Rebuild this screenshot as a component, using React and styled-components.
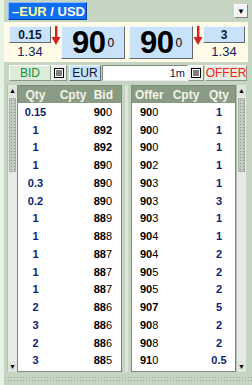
import React from 'react';
import styled, { createGlobalStyle } from 'styled-components';

const bids = [
  ['0.15', '900'], ['1', '892'], ['1', '892'], ['1', '890'], ['0.3', '890'],
  ['0.2', '890'], ['1', '889'], ['1', '888'], ['1', '887'], ['1', '887'],
  ['1', '887'], ['2', '886'], ['3', '886'], ['2', '886'], ['3', '885']
];

const offers = [
  ['900', '1'], ['900', '1'], ['900', '1'], ['902', '1'], ['903', '1'],
  ['903', '3'], ['903', '1'], ['904', '1'], ['904', '2'], ['905', '2'],
  ['905', '2'], ['907', '5'], ['908', '2'], ['908', '2'], ['910', '0.5']
];

const GlobalStyle = createGlobalStyle`
  html, body {
    margin: 0;
    padding: 0;
    background: #c6d4c2;
  }
  body {
    font-family: "Liberation Sans", Arial, sans-serif;
  }
`;

const Window = styled.div`
  width: 252px;
  height: 385px;
  box-sizing: border-box;
  background: #c6d4c2;
  border-left: 4px solid #e6f2e4;
  display: flex;
  flex-direction: column;
  overflow: hidden;
`;

const TitleBar = styled.div`
  height: 22px;
  display: flex;
  align-items: center;
  justify-content: space-between;
  padding: 0 4px 0 4px;
`;

const TitleTab = styled.div`
  width: 79px;
  height: 18px;
  box-sizing: border-box;
  background: #0f6ef2;
  border: 1px solid;
  border-color: #8ab8ff #0040a8 #0040a8 #8ab8ff;
  color: #fff;
  font-size: 13px;
  font-weight: bold;
  display: flex;
  align-items: center;
  padding-left: 3px;
`;

const Ccy = styled.span`
  color: ${p => p.$hi ? '#ffff98' : '#ffffff'};
`;

const DropButton = styled.div`
  width: 14px;
  height: 14px;
  box-sizing: border-box;
  background: #f4f4f4;
  border: 1px solid;
  border-color: #ffffff #808080 #808080 #ffffff;
  display: flex;
  align-items: center;
  justify-content: center;
  font-size: 8px;
  color: #000;
`;

const PricePanel = styled.div`
  background: #fffbe6;
  margin-right: 4px;
  height: 40px;
  padding: 4px 0 0 5px;
  box-sizing: border-box;
  display: grid;
  grid-template-columns: 42px 10px 64px 4px 64px 10px 42px;
  grid-template-rows: 17px 16px;
  align-items: start;
`;

const SizeButton = styled.div`
  grid-row: 1;
  grid-column: ${p => p.$col};
  height: 17px;
  box-sizing: border-box;
  background: #c8e2fa;
  border: 1px solid;
  border-color: #eef6ff #606870 #606870 #eef6ff;
  font-size: 12px;
  font-weight: bold;
  color: #0c1830;
  display: flex;
  align-items: center;
  justify-content: center;
`;

const SubPrice = styled.div`
  grid-row: 2;
  grid-column: ${p => p.$col};
  font-size: 13px;
  color: #14235a;
  text-align: center;
  line-height: 16px;
  padding-top: 1px;
`;

const Arrow = styled.svg`
  grid-row: 1 / span 2;
  grid-column: ${p => p.$col};
  width: 10px;
  height: 20px;
`;

const BigPrice = styled.div`
  grid-row: 1 / span 2;
  grid-column: ${p => p.$col};
  height: 33px;
  box-sizing: border-box;
  background: #c8e2fa;
  border: 1px solid;
  border-color: #eef6ff #606870 #606870 #eef6ff;
  display: flex;
  align-items: center;
  justify-content: center;
  color: #000;
`;

const Figure = styled.span`
  font-size: 31px;
  font-weight: bold;
  letter-spacing: -0.5px;
`;

const Pip = styled.span`
  font-size: 12px;
  margin-left: 2px;
  margin-top: 1px;
`;

const ControlRow = styled.div`
  height: 20px;
  display: flex;
  align-items: center;
  padding: 2px 0 0 5px;
  box-sizing: border-box;
`;

const SideButton = styled.div`
  width: 42px;
  height: 16px;
  box-sizing: border-box;
  background: ${p => p.$bg};
  border: 1px solid;
  border-color: #ffffff #8a9888 #8a9888 #ffffff;
  color: ${p => p.$color};
  font-size: 12px;
  display: flex;
  align-items: center;
  justify-content: center;
  margin-left: ${p => p.$ml || 0}px;
`;

const IconButton = styled.div`
  width: 16px;
  height: 16px;
  box-sizing: border-box;
  background: #ecefec;
  border: 1px solid;
  border-color: #ffffff #8a9888 #8a9888 #ffffff;
  display: flex;
  align-items: center;
  justify-content: center;
`;

const CcyButton = styled.div`
  width: 32px;
  height: 16px;
  margin-left: 2px;
  box-sizing: border-box;
  background: #c8e2fa;
  border: 1px solid;
  border-color: #eef6ff #606870 #606870 #eef6ff;
  color: #0c1830;
  font-size: 12px;
  display: flex;
  align-items: center;
  justify-content: center;
`;

const AmountInput = styled.div`
  width: 86px;
  height: 16px;
  margin-left: 1px;
  box-sizing: border-box;
  background: #fff;
  border: 1px solid;
  border-color: #808880 #f0f0f0 #f0f0f0 #808880;
  color: #102040;
  font-size: 11px;
  display: flex;
  align-items: center;
  justify-content: flex-end;
  padding-right: 2px;
`;

const Books = styled.div`
  flex: 1;
  display: flex;
  padding: 3px 5px 0 3px;
  min-height: 0;
`;

const ScrollBar = styled.div`
  width: 10px;
  box-sizing: border-box;
  background: #e8eae8;
  border-left: 1px solid #b4c0b2;
  display: flex;
  flex-direction: column;
`;

const ScrollArrow = styled.div`
  height: 11px;
  display: flex;
  align-items: center;
  justify-content: center;
  font-size: 7px;
  color: #000;
  background: #dfe4de;
`;

const Thumb = styled.div`
  height: 72px;
  margin: 2px 1px;
  background-color: #c4ccc2;
  background-image: radial-gradient(#8a948a 0.6px, transparent 0.7px);
  background-size: 3px 3px;
  border: 1px solid #a8b2a6;
`;

const Track = styled.div`
  flex: 1;
`;

const Book = styled.div`
  width: 105px;
  box-sizing: border-box;
  background: #fff;
  border: 1px solid #7c8a7a;
  display: flex;
  flex-direction: column;
  overflow: hidden;
`;

const Splitter = styled.div`
  width: 9px;
  display: flex;
  justify-content: center;
  &::after {
    content: '';
    width: 3px;
    background: #dbe6d8;
  }
`;

const Row = styled.div`
  display: grid;
  grid-template-columns: ${p => p.$cols};
  align-items: center;
  height: ${p => p.$head ? '17px' : '17.75px'};
  flex-shrink: 0;
  background: ${p => p.$head ? '#8a9b84' : 'transparent'};
  font-size: ${p => p.$head ? '12px' : '11px'};
  font-weight: bold;
  color: ${p => p.$head ? '#f2f4e8' : '#000'};
`;

const Cell = styled.div`
  text-align: ${p => p.$align};
  padding-left: ${p => p.$pl || 0}px;
  padding-right: ${p => p.$pr || 0}px;
  color: ${p => p.$qty ? '#0a2478' : 'inherit'};
  white-space: nowrap;
`;

const Pips = styled.span`
  font-weight: normal;
`;

const BottomGrip = styled.div`
  height: 13px;
  display: flex;
  align-items: center;
  &::after {
    content: '';
    flex: 1;
    height: 5px;
    background-image: radial-gradient(#9aa698 0.6px, transparent 0.7px);
    background-size: 3px 3px;
  }
`;

const DownArrow = ({ col }) => (
  <Arrow viewBox="0 0 10 20" $col={col}>
    <rect x="4" y="0" width="2.4" height="12" fill="#d42020" />
    <polygon points="0.5,11 9.5,11 5,19" fill="#d42020" />
  </Arrow>
);

const ListIcon = () => (
  <svg width="10" height="10" viewBox="0 0 10 10">
    <rect x="0.5" y="0.5" width="9" height="9" fill="#fff" stroke="#000" />
    <rect x="2" y="2.5" width="6" height="1" fill="#000" />
    <rect x="2" y="4.5" width="6" height="1" fill="#000" />
    <rect x="2" y="6.5" width="6" height="1" fill="#000" />
  </svg>
);

const Price = ({ value, boldAll }) => (
  <>
    {value.slice(0, 2)}
    {boldAll ? value.slice(2) : <Pips>{value.slice(2)}</Pips>}
  </>
);

const Scroller = () => (
  <ScrollBar>
    <ScrollArrow>▲</ScrollArrow>
    <Thumb />
    <Track />
    <ScrollArrow>▼</ScrollArrow>
  </ScrollBar>
);

const bidCols = '35px 40px 1fr';
const offerCols = '37px 34px 1fr';

export default function App() {
  return (
    <>
      <GlobalStyle />
      <Window>
        <TitleBar>
          <TitleTab>
            <Ccy>–</Ccy>
            <Ccy $hi>EUR</Ccy>
            <Ccy>&nbsp;/&nbsp;USD</Ccy>
          </TitleTab>
          <DropButton>▼</DropButton>
        </TitleBar>

        <PricePanel>
          <SizeButton $col={1}>0.15</SizeButton>
          <DownArrow col={2} />
          <BigPrice $col={3}>
            <Figure>90</Figure>
            <Pip>0</Pip>
          </BigPrice>
          <BigPrice $col={5}>
            <Figure>90</Figure>
            <Pip>0</Pip>
          </BigPrice>
          <DownArrow col={6} />
          <SizeButton $col={7}>3</SizeButton>
          <SubPrice $col={1}>1.34</SubPrice>
          <SubPrice $col={7}>1.34</SubPrice>
        </PricePanel>

        <ControlRow>
          <SideButton $bg="#dcecd8" $color="#109238">BID</SideButton>
          <IconButton><ListIcon /></IconButton>
          <CcyButton>EUR</CcyButton>
          <AmountInput>1m</AmountInput>
          <IconButton><ListIcon /></IconButton>
          <SideButton $bg="#e2ece0" $color="#ff2020" $ml={1}>OFFER</SideButton>
        </ControlRow>

        <Books>
          <Scroller />
          <Book>
            <Row $head $cols={bidCols}>
              <Cell $align="center">Qty</Cell>
              <Cell $align="center">Cpty</Cell>
              <Cell $align="right" $pr={8}>Bid</Cell>
            </Row>
            {bids.map(([qty, px], i) => (
              <Row key={i} $cols={bidCols}>
                <Cell $align="center" $qty>{qty}</Cell>
                <Cell $align="center"></Cell>
                <Cell $align="right" $pr={9}>
                  <Price value={px} boldAll={px === '892'} />
                </Cell>
              </Row>
            ))}
          </Book>
          <Splitter />
          <Book>
            <Row $head $cols={offerCols}>
              <Cell $align="left" $pl={3}>Offer</Cell>
              <Cell $align="center">Cpty</Cell>
              <Cell $align="center">Qty</Cell>
            </Row>
            {offers.map(([px, qty], i) => (
              <Row key={i} $cols={offerCols}>
                <Cell $align="left" $pl={8}>
                  <Price value={px} boldAll={px === '907'} />
                </Cell>
                <Cell $align="center"></Cell>
                <Cell $align="center" $qty>{qty}</Cell>
              </Row>
            ))}
          </Book>
          <Scroller />
        </Books>

        <BottomGrip />
      </Window>
    </>
  );
}
